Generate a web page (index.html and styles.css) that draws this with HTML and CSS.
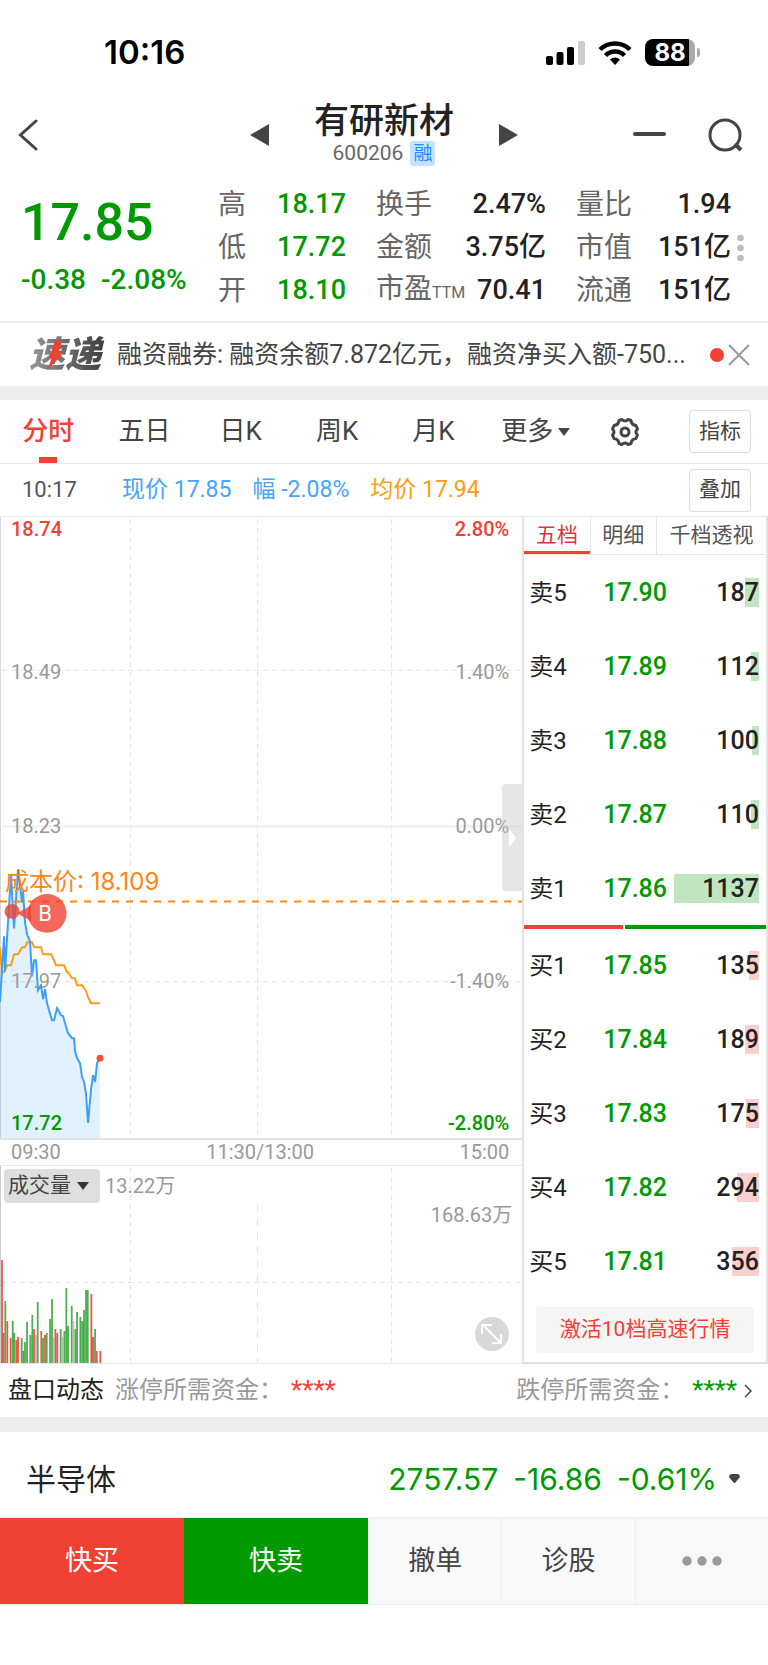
FILE: index.html
```
<!DOCTYPE html>
<html lang="zh-CN">
<head>
	<meta charset="UTF-8">
	<meta name="viewport" content="width=device-width, initial-scale=1.0">
	<title>有研新材 600206</title>
	<link rel="stylesheet" href="styles.css">
</head>
<body>
<div class="status">
	<div class="clock">10:16</div>
	<div class="status-icons">
		<svg width="39" height="26" viewBox="0 0 39 26">
			<rect x="0" y="16" width="7" height="9" rx="2"/>
			<rect x="10.500" y="12" width="7" height="13" rx="2"/>
			<rect x="21" y="7" width="7" height="18" rx="2"/>
			<rect x="32" y="1" width="7" height="24" rx="2" fill="#ccc"/>
		</svg>
		<svg width="34" height="26" viewBox="0 0 34 26" fill="none" stroke="#000" stroke-width="4.500">
			<path d="M2 9.500A21.500 21.500 0 0 1 32 9.500"/>
			<path d="M7.500 15.500A13.500 13.500 0 0 1 26.500 15.500"/>
			<path d="M17 25l-5-5.500a7 7 0 0 1 10 0z" fill="#000" stroke="none"/>
		</svg>
		<div class="battery"><span>88</span></div>
	</div>
</div>

<header class="header">
	<button class="icon-btn" aria-label="返回">
		<svg width="20" height="32" viewBox="0 0 20 32" fill="none" stroke="#444" stroke-width="3"><path d="M18 2L2.500 16L18 30" stroke-linecap="round"/></svg>
	</button>
	<div class="switcher">
		<button class="icon-btn" aria-label="上一只"><svg width="20" height="22" viewBox="0 0 20 22" fill="#444"><path d="M0 11L19 0V22z"/></svg></button>
		<div class="name">
			<h1>有研新材</h1>
			<div class="code">600206 <span class="tag">融</span></div>
		</div>
		<button class="icon-btn" aria-label="下一只"><svg width="20" height="22" viewBox="0 0 20 22" fill="#444"><path d="M20 11L1 0V22z"/></svg></button>
	</div>
	<div class="tools">
		<button class="icon-btn" aria-label="移除自选"><svg width="33" height="34" viewBox="0 0 33 34"><path d="M2 16H31" stroke="#444" stroke-width="4" stroke-linecap="round"/></svg></button>
		<button class="icon-btn" aria-label="搜索"><svg width="35" height="34" viewBox="0 0 35 34" fill="none" stroke="#444" stroke-width="3"><circle cx="17" cy="17" r="15"/><path d="M27 26L33 32" stroke-width="4"/></svg></button>
	</div>
</header>

<section class="quote">
	<div class="price">
		<div class="now">17.85</div>
		<div class="change"><span>-0.38</span><span>-2.08%</span></div>
	</div>
	<dl class="stat stat-price">
		<dt>高</dt><dd>18.17</dd>
		<dt>低</dt><dd>17.72</dd>
		<dt>开</dt><dd>18.10</dd>
	</dl>
	<dl class="stat">
		<dt>换手</dt><dd>2.47%</dd>
		<dt>金额</dt><dd>3.75亿</dd>
		<dt>市盈<small>TTM</small></dt><dd>70.41</dd>
	</dl>
	<dl class="stat">
		<dt>量比</dt><dd>1.94</dd>
		<dt>市值</dt><dd>151亿</dd>
		<dt>流通</dt><dd>151亿</dd>
	</dl>
	<button class="icon-btn" aria-label="展开"><svg width="7" height="28" viewBox="0 0 7 28" fill="#bbb"><circle cx="3.500" cy="4" r="3.300"/><circle cx="3.500" cy="14" r="3.300"/><circle cx="3.500" cy="24" r="3.300"/></svg></button>
</section>

<section class="news">
	<div class="logo">速递
		<svg width="20" height="30" viewBox="0 0 20 30" fill="#f04134"><path d="M9 1h7l-3 10h3l-2 4h2L1 30l5-12H3z"/></svg>
	</div>
	<a href="#">融资融券: 融资余额7.872亿元，融资净买入额-750...</a>
	<i class="dot"></i>
	<button class="icon-btn" aria-label="关闭"><svg width="22" height="22" viewBox="0 0 22 22" stroke="#999" stroke-width="2"><path d="M1 1L21 21M21 1L1 21"/></svg></button>
</section>

<nav class="tabs">
	<button class="tab active">分时</button>
	<button class="tab">五日</button>
	<button class="tab">日K</button>
	<button class="tab">周K</button>
	<button class="tab">月K</button>
	<button class="tab more">更多<svg width="12" height="8" viewBox="0 0 12 8" fill="#444"><path d="M0 0h12L6 8z"/></svg></button>
	<button class="icon-btn gear" aria-label="设置">
		<svg width="32" height="32" viewBox="0 0 32 32" fill="none" stroke="#444" stroke-width="3" stroke-linejoin="round">
			<path d="M13 3.500Q16 6.500 19 3.500L22 4.500Q22.500 9 27 9.500L28.500 13Q25.500 16 28.500 19L27 22.500Q22.500 23 22 27.500L19 28.500Q16 25.500 13 28.500L10 27.500Q9.500 23 5 22.500L3.500 19Q6.500 16 3.500 13L5 9.500Q9.500 9 10 4.500z"/>
			<circle cx="16" cy="16" r="4"/>
		</svg>
	</button>
	<button class="box-btn">指标</button>
</nav>

<div class="info">
	<span class="time">10:17</span>
	<span class="blue">现价 17.85</span>
	<span class="blue">幅 -2.08%</span>
	<span class="orange">均价 17.94</span>
	<button class="box-btn">叠加</button>
</div>

<main class="main">
	<div class="charts">
		<div class="chart">
			<svg class="plot" viewBox="0 0 522 622" preserveAspectRatio="none" fill="none">
				<g stroke="#e2e2e2" stroke-dasharray="5 4">
					<path d="M130.500 2V622M257.500 2V622M391.500 2V622M2 153.500H522M2 465.500H522"/>
				</g>
				<path d="M2 310H522" stroke="#eee" stroke-width="2"/>
				<path d="M0.500 0V622" stroke="#d8d8d8"/>
				<path d="M0 486L4 420L5 455L11 358L14 412L18 353L22 386L23 375L25 406L27 418L30 425L32 460L34 444L36 444L38 474L41 469L43 483L45 473L47 487L52 504L54 504L57 492L61 499L63 500L68 517L72 522L74 522L75 535L77 542L80 547L82 561L84 566L86 578L88 607L91 573L93 559L95 566L97 547L100 542V622H0z" fill="#3ca0f6" fill-opacity=".15"/>
				<path d="M0 431L2 456H4L7 449H11L14 438H18L22 431H25L27 426H32L34 431H41L43 438H51L54 444L56 449H64L67 456H68L72 462H75L77 469H82L86 475L88 481L91 487H100" stroke="#ff9c12" stroke-width="2"/>
				<path d="M0 486L4 420L5 455L11 358L14 412L18 353L22 386L23 375L25 406L27 418L30 425L32 460L34 444L36 444L38 474L41 469L43 483L45 473L47 487L52 504L54 504L57 492L61 499L63 500L68 517L72 522L74 522L75 535L77 542L80 547L82 561L84 566L86 578L88 607L91 573L93 559L95 566L97 547L100 542" stroke="#3ca0f6" stroke-width="2"/>
				<path d="M0 385H522" stroke="#ff8613" stroke-width="2" stroke-dasharray="7 7"/>
				<circle cx="100" cy="542" r="3.500" fill="#f5532f"/>
				<g fill="#f04134" fill-opacity=".8">
					<circle cx="12" cy="395" r="7.500"/>
					<circle cx="47" cy="397" r="19.500"/>
					<path d="M17 397L31 389V405z"/>
				</g>
			</svg>
			<div class="scale"><b class="red">18.74</b><span>18.49</span><span>18.23</span><span>17.97</span><b class="green">17.72</b></div>
			<div class="scale right"><b class="red">2.80%</b><span>1.40%</span><span>0.00%</span><span>-1.40%</span><b class="green">-2.80%</b></div>
			<div class="cost">成本价: 18.109</div>
			<div class="mark">B</div>
			<button class="handle" aria-label="收起盘口"><svg width="7" height="18" viewBox="0 0 7 18" fill="#fff"><path d="M0 0L7 9L0 18z"/></svg></button>
		</div>
		<div class="axis"><span>09:30</span><span>11:30/13:00</span><span>15:00</span></div>
		<div class="volume">
			<svg class="plot" viewBox="0 0 522 197" preserveAspectRatio="none" fill="none">
				<path d="M130.500 2V197M391.500 2V197M2 116.500H522" stroke="#e2e2e2" stroke-dasharray="5 4"/>
				<path d="M257.500 38V197" stroke="#e2e2e2" stroke-dasharray="8 6"/>
				<path d="M0.500 0V197" stroke="#ccc"/>
				<path stroke="#f04134" stroke-opacity=".9" stroke-width="1.800" d="M2 197v-103M3.700 197v-30M7.300 197v-42M10.700 197v-25M16.300 197v-23M18 197v-26M23.300 197v-12M34 197v-34M41.300 197v-32M45 197v-28M55.300 197v-34M57.300 197v-30M91.300 197v-69M93 197v-26M96.700 197v-12M100.300 197v-12"/>
				<path stroke="#4caf50" stroke-width="1.800" d="M5.300 197v-62M12.700 197v-42M14.300 197v-30M21.700 197v-25M25 197v-21M27 197v-41M30.300 197v-28M32.300 197v-48M37.700 197v-61M43 197v-25M46.700 197v-30M50 197v-44M52 197v-64M60.700 197v-34M64.300 197v-32M66.300 197v-75M68 197v-37M71.700 197v-57M75.300 197v-34M77 197v-51M80.300 197v-46M82.300 197v-42M84 197v-53M86 197v-73M87.700 197v-73M95 197v-34"/>
				<path stroke="#bbb" stroke-width="1.800" d="M36 197v-28M53.700 197v-26M62.700 197v-26M73.300 197v-42"/>
			</svg>
			<div class="vol-head">
				<button class="vol-btn">成交量<svg width="12" height="8" viewBox="0 0 12 8" fill="#333"><path d="M0 0h12L6 8z"/></svg></button>
				<span>13.22万</span>
			</div>
			<div class="vol-max">168.63万</div>
			<button class="expand" aria-label="全屏"><svg width="22" height="22" viewBox="0 0 22 22" fill="none" stroke="#fff" stroke-width="2"><path d="M1 11V2H11M2 2L20 20M20 11V20H11"/></svg></button>
		</div>
	</div>

	<div class="book">
		<div class="book-tabs">
			<button class="active">五档</button>
			<button>明细</button>
			<button>千档透视</button>
		</div>
		<table class="sell">
			<tr><th>卖5</th><td class="p">17.90</td><td class="q"><i style="width:14px"></i><span>187</span></td></tr>
			<tr><th>卖4</th><td class="p">17.89</td><td class="q"><i style="width:8px"></i><span>112</span></td></tr>
			<tr><th>卖3</th><td class="p">17.88</td><td class="q"><i style="width:7px"></i><span>100</span></td></tr>
			<tr><th>卖2</th><td class="p">17.87</td><td class="q"><i style="width:8px"></i><span>110</span></td></tr>
			<tr><th>卖1</th><td class="p">17.86</td><td class="q"><i style="width:85px"></i><span>1137</span></td></tr>
		</table>
		<div class="ratio"><i style="width:41%"></i><i></i></div>
		<table class="buy">
			<tr><th>买1</th><td class="p">17.85</td><td class="q"><i style="width:10px"></i><span>135</span></td></tr>
			<tr><th>买2</th><td class="p">17.84</td><td class="q"><i style="width:14px"></i><span>189</span></td></tr>
			<tr><th>买3</th><td class="p">17.83</td><td class="q"><i style="width:13px"></i><span>175</span></td></tr>
			<tr><th>买4</th><td class="p">17.82</td><td class="q"><i style="width:22px"></i><span>294</span></td></tr>
			<tr><th>买5</th><td class="p">17.81</td><td class="q"><i style="width:27px"></i><span>356</span></td></tr>
		</table>
		<button class="activate">激活10档高速行情</button>
	</div>
</main>

<section class="funds">
	<strong>盘口动态</strong>
	<span>涨停所需资金：</span><b class="red">****</b>
	<span class="push">跌停所需资金：</span><b class="green">****</b>
	<svg width="8" height="14" viewBox="0 0 8 14" fill="none" stroke="#444" stroke-width="1.500"><path d="M1 1L7 7L1 13"/></svg>
</section>

<section class="sector">
	<span class="sector-name">半导体</span>
	<span>2757.57</span>
	<span>-16.86</span>
	<span>-0.61%</span>
	<svg width="11" height="9" viewBox="0 0 11 9" fill="#444"><path d="M2 0H9Q11 1 11 3L6 9H5L0 3Q0 1 2 0z"/></svg>
</section>

<footer class="actions">
	<button class="buy-btn">快买</button>
	<button class="sell-btn">快卖</button>
	<button>撤单</button>
	<button>诊股</button>
	<button aria-label="更多"><svg width="40" height="10" viewBox="0 0 40 10" fill="#999"><circle cx="5" cy="5" r="4.700"/><circle cx="20" cy="5" r="4.700"/><circle cx="35" cy="5" r="4.700"/></svg></button>
</footer>
</body>
</html>
```
FILE: styles.css
```
*{
	box-sizing:border-box;
}
body{
	margin:0;
	background:#fff;
	color:#222;
	font-family:Roboto, "Noto Sans CJK SC", sans-serif;
	line-height:1.2;
}
button{
	font:inherit;
	color:inherit;
	background:none;
	border:0;
	padding:0;
}
svg{
	display:block;
	flex:none;
}
.red{
	color:#f04134;
}
.green{
	color:#090;
}
.blue{
	color:#45a5f8;
}
.orange{
	color:#ff9c12;
}

/* status bar */
.status{
	height:95px;
	padding:10px 68px 0 104px;
	display:flex;
	align-items:center;
	justify-content:space-between;
}
.clock{
	font-family:Inter, sans-serif;
	font-size:33px;
	font-weight:600;
	color:#000;
}
.status-icons{
	display:flex;
	align-items:center;
	gap:13px;
}
.battery{
	position:relative;
	width:50px;
	height:27px;
	margin-right:5px;
	border-radius:8px;
	background:linear-gradient(90deg, #000 88%, #aaa 88%);
	color:#fff;
	font:700 24px/27px Inter, sans-serif;
	text-align:center;
}
.battery::after{
	content:"";
	position:absolute;
	right:-5px;
	top:9px;
	width:3px;
	height:9px;
	border-radius:0 3px 3px 0;
	background:#aaa;
}

/* title */
.header{
	height:85px;
	padding:0 18px 6px;
	display:grid;
	grid-template-columns:1fr auto 1fr;
	align-items:center;
}
.icon-btn{
	display:flex;
	justify-content:flex-start;
}
.switcher{
	display:flex;
	align-items:center;
	gap:44px;
}
.name{
	text-align:center;
}
h1{
	margin:0;
	font-size:35px;
	line-height:38px;
	font-weight:500;
}
.code{
	display:flex;
	align-items:center;
	justify-content:center;
	gap:7px;
	font-size:21px;
	line-height:25px;
	color:#666;
}
.tag{
	padding:0 3px;
	border-radius:3px;
	background:#c5e2ff;
	color:#1e8cff;
	font-size:19px;
}
.tools{
	display:flex;
	justify-content:flex-end;
	gap:42px;
	padding-right:7px;
}

/* quote */
.quote{
	height:143px;
	padding:0 24px 6px 21px;
	display:flex;
	align-items:center;
	border-bottom:2px solid #eee;
}
.price{
	width:197px;
	padding-top:3px;
	color:#090;
	font-weight:500;
}
.now{
	font-size:52px;
	line-height:62px;
}
.change{
	display:flex;
	gap:15px;
	font-size:28px;
	line-height:52px;
}
.stat{
	margin:0 30px 0 0;
	display:grid;
	grid-template-columns:auto 1fr;
	grid-auto-rows:43px;
	align-items:center;
	flex:170;
	font-size:27px;
	line-height:43px;
	white-space:nowrap;
}
.stat-price{
	flex:128;
}
.stat:nth-last-child(2){
	flex:155;
	margin-right:6px;
}
.stat dt{
	font-size:28px;
	color:#666;
}
.stat dd{
	margin:0;
	text-align:right;
	font-weight:500;
}
.stat-price dd{
	color:#090;
}
.stat small{
	font-size:16px;
}

/* news */
.news{
	height:63px;
	padding:0 18px 0 29px;
	display:flex;
	align-items:center;
}
.logo{
	position:relative;
	width:88px;
	font-size:36px;
	line-height:44px;
	font-weight:900;
	font-style:italic;
	background:linear-gradient(90deg, #999, #444 80%);
	background-clip:text;
	-webkit-background-clip:text;
	color:transparent;
}
.logo svg{
	position:absolute;
	left:17px;
	top:7px;
}
.news a{
	flex:1;
	min-width:0;
	overflow:hidden;
	white-space:nowrap;
	color:#444;
	font-size:25px;
	text-decoration:none;
}
.dot{
	width:14px;
	height:14px;
	margin:0 4px 0 20px;
	border-radius:50%;
	background:#f04134;
}

/* period tabs */
.tabs{
	height:78px;
	padding-right:17px;
	border-top:14px solid #ededed;
	border-bottom:1px solid #e8e8e8;
	display:flex;
	align-items:center;
}
.tab{
	position:relative;
	flex:96;
	height:63px;
	display:flex;
	align-items:center;
	justify-content:center;
	gap:5px;
	font-size:26px;
	color:#444;
}
.tab.more{
	flex:108;
}
.gear{
	flex:70;
	justify-content:center;
}
.tab.active{
	color:#f04134;
	font-weight:500;
}
.tab.active::after{
	content:"";
	position:absolute;
	left:50%;
	bottom:0;
	width:18px;
	height:6px;
	margin-left:-9px;
	background:#f04134;
}
.box-btn{
	width:62px;
	height:43px;
	border:1px solid #ddd;
	border-radius:4px;
	font-size:21px;
	color:#444;
}
.tabs .box-btn{
	margin-left:29px;
}
.info{
	height:53px;
	padding:0 17px 0 22px;
	border-bottom:1px solid #e8e8e8;
	display:flex;
	align-items:center;
	gap:21px;
	font-size:23px;
}
.time{
	width:79px;
	font-size:22px;
	color:#555;
}
.info .box-btn{
	margin-left:auto;
}

/* charts + order book */
.main{
	display:flex;
}
.charts{
	flex:1;
	display:flex;
	flex-direction:column;
	color:#999;
	font-size:20px;
}
.chart{
	position:relative;
	flex:1;
	border-bottom:2px solid #e2e2e2;
}
.plot{
	position:absolute;
	left:0;
	top:0;
	width:100%;
	height:100%;
}
.scale{
	position:absolute;
	left:11px;
	top:0;
	bottom:3px;
	display:grid;
	grid-template-rows:1fr 2fr 2fr 2fr 1fr;
	align-items:center;
	line-height:24px;
}
.scale b{
	font-weight:500;
}
.scale .red{
	align-self:start;
}
.scale .green{
	align-self:end;
}
.scale.right{
	left:auto;
	right:13px;
	text-align:right;
}
.cost{
	position:absolute;
	left:5px;
	top:350px;
	font-family:Inter, "Noto Sans CJK SC", sans-serif;
	font-size:24px;
	line-height:30px;
	color:#ff8613;
}
.mark{
	position:absolute;
	left:34px;
	top:385px;
	width:22px;
	line-height:24px;
	text-align:center;
	font-size:22px;
	color:#fff;
}
.handle{
	position:absolute;
	right:0;
	top:267px;
	width:20px;
	height:107px;
	padding-left:7px;
	border-radius:4px 0 0 4px;
	background:rgba(200,200,200,.45);
}
.axis{
	height:26px;
	padding:0 13px 2px 11px;
	border-bottom:1px solid #e5e5e5;
	display:flex;
	justify-content:space-between;
	align-items:center;
}
.volume{
	position:relative;
	height:198px;
	border-bottom:1px solid #e8e8e8;
}
.vol-head{
	position:relative;
	padding:3px 4px 0;
	display:flex;
	align-items:center;
	gap:5px;
}
.vol-btn{
	width:96px;
	height:34px;
	padding-left:4px;
	display:flex;
	align-items:center;
	gap:6px;
	border-radius:4px;
	background:#dedede;
	color:#444;
	font-size:21px;
}
.vol-max{
	position:relative;
	padding:0 10px;
	text-align:right;
}
.expand{
	position:absolute;
	right:13px;
	bottom:12px;
	width:34px;
	height:34px;
	padding:6px;
	border-radius:50%;
	background:#d8d8d8;
}
.book{
	width:32%;
	border:solid #e2e2e2;
	border-width:0 2px 2px;
}
.book-tabs{
	height:38px;
	display:flex;
	border-bottom:1px solid #e5e5e5;
}
.book-tabs button{
	flex:66;
	border-right:1px solid #e5e5e5;
	font-size:21px;
	color:#555;
	white-space:nowrap;
}
.book-tabs button:last-child{
	flex:110;
	border-right:0;
}
.book-tabs .active{
	box-shadow:inset 0 -3px #f04134;
	color:#d9363c;
}
table{
	width:100%;
	border-collapse:collapse;
	font-size:25px;
}
tr{
	height:74px;
}
th, td{
	padding:0;
	font-weight:500;
}
.sell th, .sell td{
	padding-top:2px;
}
th{
	width:79px;
	padding-left:5px;
	text-align:left;
	font-size:24px;
	font-weight:400;
}
.p{
	color:#090;
}
.q{
	position:relative;
	padding-right:7px;
	text-align:right;
}
.q i{
	position:absolute;
	right:7px;
	top:23px;
	height:29px;
	background:#c0e6bf;
}
.q span{
	position:relative;
}
.buy .q i{
	top:22px;
	background:#fbcfcd;
}
.ratio{
	display:flex;
	gap:2px;
	height:4px;
}
.ratio i{
	background:#f04134;
}
.ratio i:last-child{
	flex:1;
	background:#090;
}
.activate{
	display:block;
	width:calc(100% - 24px);
	height:46px;
	margin:8px 12px 9px;
	border-radius:4px;
	background:#f5f5f5;
	color:#f04134;
	font-size:21px;
}

/* bottom */
.funds{
	height:53px;
	padding:0 16px 0 8px;
	display:flex;
	align-items:center;
	font-size:24px;
	color:#999;
	white-space:nowrap;
}
.funds strong{
	margin-right:11px;
	font-weight:400;
	color:#222;
}
.funds b{
	margin-left:8px;
	font-size:26px;
	font-weight:400;
}
.push{
	margin-left:auto;
}
.funds svg{
	margin-left:7px;
}
.sector{
	height:101px;
	padding:8px 28px 0 26px;
	border-top:15px solid #ededed;
	border-bottom:1px solid #eee;
	display:flex;
	align-items:center;
	gap:15px;
	font-family:Inter, "Noto Sans CJK SC", sans-serif;
	font-size:30px;
	color:#090;
}
.sector-name{
	margin-right:auto;
	color:#222;
}
.sector svg{
	margin-left:-3px;
}
.actions{
	height:87px;
	margin-bottom:60px;
	display:flex;
	background:#f8f8f8;
	border-bottom:1px solid #eee;
}
.actions button{
	flex:133;
	display:flex;
	align-items:center;
	justify-content:center;
	border-left:1px solid #eee;
	font-size:27px;
	color:#444;
}
.actions .buy-btn, .actions .sell-btn{
	flex:185;
	border:0;
	background:#f04134;
	color:#fff;
}
.actions .sell-btn{
	background:#090;
}
```
